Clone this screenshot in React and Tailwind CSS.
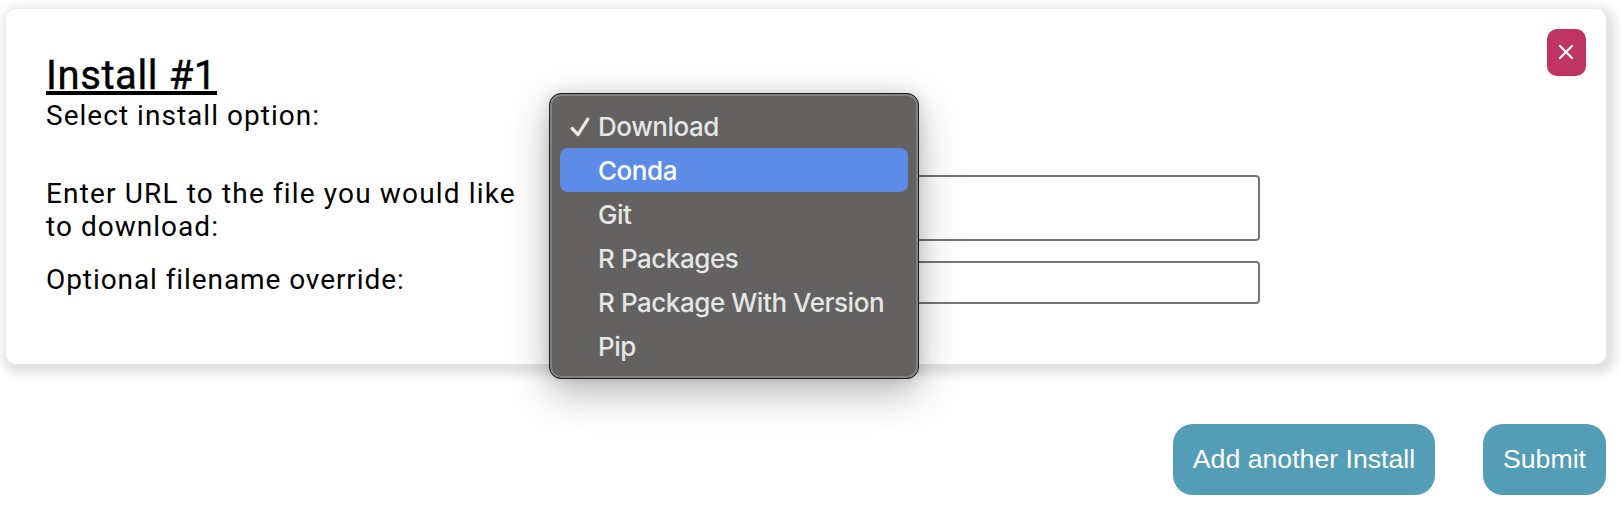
import React from "react";

const OPTIONS = ["Download", "Conda", "Git", "R Packages", "R Package With Version", "Pip"];

function Menu() {
  return (
    <ul className="absolute left-[549px] top-[93px] h-[286px] w-[370px] rounded-[12px] border border-[#1c1c1c] bg-[#636260] px-[10px] pt-[10px] font-['Inter'] text-[26px] font-medium leading-[44px] tracking-[-0.45px] text-[#e6e6e5] shadow-[inset_0_0_0_2px_#838382,0_14px_40px_rgba(0,0,0,0.28),0_0_16px_rgba(0,0,0,0.12)]">
      {OPTIONS.map((o) => (
        <li
          key={o}
          className={
            o === "Conda"
              ? "flex h-[44px] items-center rounded-[8px] bg-[#5d8ce6] pl-[10px] text-white"
              : "flex h-[44px] items-center pl-[10px]"
          }
        >
          <span className="flex w-[28px] shrink-0 items-center pt-[2px]">
            {o === "Download" && (
              <svg width="20" height="20" viewBox="0 0 20 20" fill="none" stroke="currentColor" strokeWidth="3.3" strokeLinecap="round" strokeLinejoin="round">
                <path d="M2.2 11.5 L8 17.6 L17.8 2.2" />
              </svg>
            )}
          </span>
          <span className="whitespace-nowrap pt-[2px]">{o}</span>
        </li>
      ))}
    </ul>
  );
}

export default function App() {
  return (
    <main className="relative h-[512px] w-[1622px] overflow-hidden bg-white pl-[6px] pt-[9px] text-black">
      <section className="flex h-[355px] w-[1600px] justify-between rounded-[10px] bg-white pl-[40px] pr-[20px] pt-[20px] font-['Roboto'] text-[28px] leading-[33px] tracking-[1.03px] shadow-[3px_4px_10px_6px_#e2e2e2]">
        <div className="pt-[22px]">
          <h1 className="h-[48px] text-[40px] leading-[50px] tracking-[0.6px]">
            <span className="inline-block h-[44px] border-b-4 border-black [-webkit-text-stroke:0.4px_black]">Install #1</span>
          </h1>
          <p className="whitespace-nowrap">Select install option:</p>
          <div className="mt-[43px] grid grid-cols-[504px_710px] gap-y-[20px]">
            <p className="h-[66px] whitespace-nowrap pt-[2px]">
              <span className="tracking-[1.15px]">Enter URL to the file you would like</span>
              <br />
              to download:
            </p>
            <input className="h-[66px] rounded-[4px] border-2 border-[#767676] bg-white" />
            <p className="whitespace-nowrap pt-[2px] tracking-[0.92px]">Optional filename override:</p>
            <input className="h-[43px] rounded-[4px] border-2 border-[#767676] bg-white" />
          </div>
        </div>
        <button className="flex h-[47px] w-[39px] items-center justify-center rounded-[10px] bg-[#c03463] pb-px pr-px">
          <svg width="16" height="16" viewBox="0 0 16 16" stroke="white" strokeWidth="2.2" strokeLinecap="round">
            <path d="M2 2 L14 14 M14 2 L2 14" />
          </svg>
        </button>
      </section>
      <div className="mt-[60px] flex w-[1600px] justify-end gap-[48px] font-['Liberation_Sans'] text-[26.67px] text-white">
        <button className="h-[71px] w-[262px] rounded-[20px] bg-[#549db7] pb-[2px]">Add another Install</button>
        <button className="h-[71px] w-[123px] rounded-[20px] bg-[#549db7] pb-[2px]">Submit</button>
      </div>
      <Menu />
    </main>
  );
}
